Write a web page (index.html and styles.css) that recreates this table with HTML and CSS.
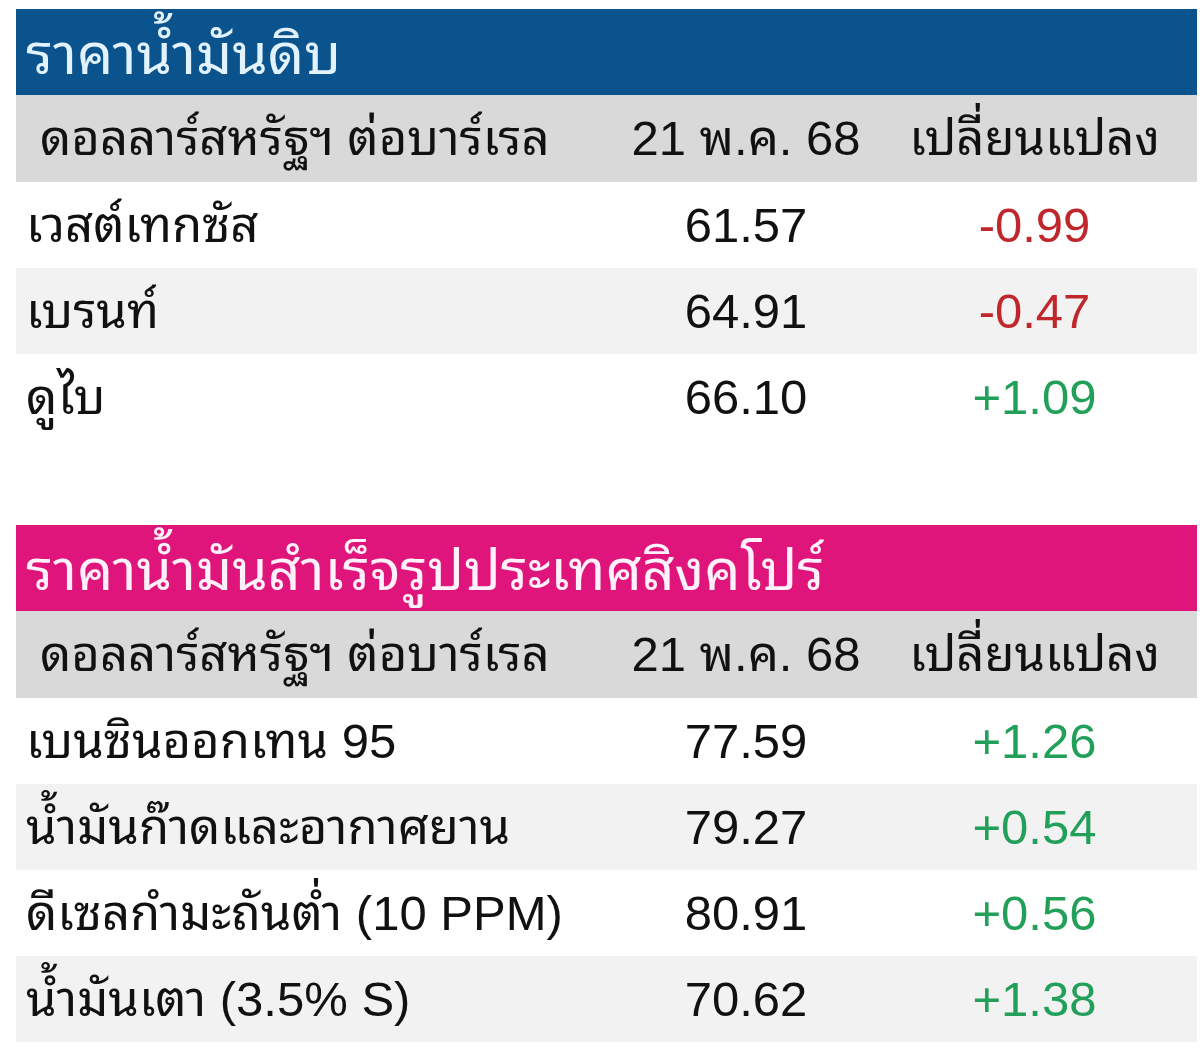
FILE: index.html
```html
<!DOCTYPE html>
<html lang="th">
<head>
<meta charset="utf-8">
<title>ราคาน้ำมัน</title>
<link rel="stylesheet" href="styles.css">
</head>
<body>
<div class="page">
  <section class="board">
    <div class="title title-blue">ราคาน้ำมันดิบ</div>
    <div class="row head">
      <div class="c1">ดอลลาร์สหรัฐฯ ต่อบาร์เรล</div>
      <div class="c2">21 พ.ค. 68</div>
      <div class="c3">เปลี่ยนแปลง</div>
    </div>
    <div class="row">
      <div class="c1">เวสต์เทกซัส</div>
      <div class="c2">61.57</div>
      <div class="c3 down">-0.99</div>
    </div>
    <div class="row alt">
      <div class="c1">เบรนท์</div>
      <div class="c2">64.91</div>
      <div class="c3 down">-0.47</div>
    </div>
    <div class="row">
      <div class="c1">ดูไบ</div>
      <div class="c2">66.10</div>
      <div class="c3 up">+1.09</div>
    </div>
  </section>

  <section class="board">
    <div class="title title-pink">ราคาน้ำมันสำเร็จรูปประเทศสิงคโปร์</div>
    <div class="row head">
      <div class="c1">ดอลลาร์สหรัฐฯ ต่อบาร์เรล</div>
      <div class="c2">21 พ.ค. 68</div>
      <div class="c3">เปลี่ยนแปลง</div>
    </div>
    <div class="row">
      <div class="c1">เบนซินออกเทน 95</div>
      <div class="c2">77.59</div>
      <div class="c3 up">+1.26</div>
    </div>
    <div class="row alt">
      <div class="c1">น้ำมันก๊าดและอากาศยาน</div>
      <div class="c2">79.27</div>
      <div class="c3 up">+0.54</div>
    </div>
    <div class="row">
      <div class="c1">ดีเซลกำมะถันต่ำ (10 PPM)</div>
      <div class="c2">80.91</div>
      <div class="c3 up">+0.56</div>
    </div>
    <div class="row alt">
      <div class="c1">น้ำมันเตา (3.5% S)</div>
      <div class="c2">70.62</div>
      <div class="c3 up">+1.38</div>
    </div>
  </section>
</div>
</body>
</html>
```

FILE: styles.css
```css
html, body {
  margin: 0;
  padding: 0;
  background: #ffffff;
}

body {
  font-family: "Liberation Sans", Tahoma, "Noto Sans Thai Looped", "Noto Looped Thai", Loma, Garuda, "TlwgTypist", Kinnari, "Noto Sans Thai", "Noto Sans", sans-serif;
  color: #111111;
}

.page {
  width: 1181px;
  padding: 9px 0 0 16px;
  display: flex;
  flex-direction: column;
  gap: 85px;
}

.board {
  display: flex;
  flex-direction: column;
}

.title {
  height: 86px;
  display: flex;
  align-items: center;
  padding-left: 10px;
  font-size: 57px;
  line-height: 1;
  padding-top: 4px;
  box-sizing: border-box;
}

.title-blue {
  background: #0b538d;
  color: #e2f3ff;
}

.title-pink {
  background: #e0157c;
  color: #fff0fa;
}

.row {
  display: grid;
  grid-template-columns: 604px 252px 325px;
  height: 86px;
  align-items: center;
  font-size: 49px;
  line-height: 1;
}

.head {
  background: #d9d9d9;
  height: 87px;
}

.alt {
  background: #f2f2f2;
}

.c1 {
  padding-left: 10px;
}

.head .c1 {
  padding-left: 24px;
}

.c2, .c3 {
  text-align: center;
}

.down {
  color: #c0272d;
}

.up {
  color: #22a05a;
}
```
